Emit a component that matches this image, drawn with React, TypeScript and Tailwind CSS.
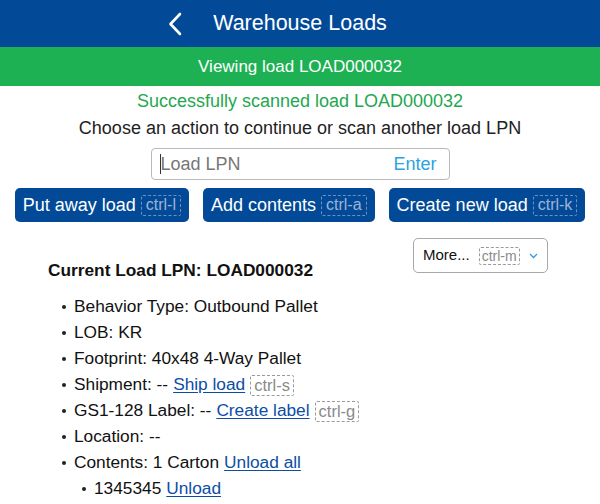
import React from "react";

const Kbd = ({ children, light }: { children: React.ReactNode; light?: boolean }) => (
  <span
    className={
      light
        ? "ml-[5px] inline-flex items-center h-[21px] px-[4px] border border-dashed border-[#6f8fbf] rounded-[2px] text-[16px] leading-none text-[#9fb3d4]"
        : "ml-[5px] inline-flex items-center h-[21px] px-[3px] border border-dashed border-[#9a9a9a] rounded-[2px] text-[16.5px] leading-none text-[#8a8a8a]"
    }
  >
    {children}
  </span>
);

const Bullet = ({ children, nested }: { children: React.ReactNode; nested?: boolean }) => (
  <li className={`flex items-center h-[26px] ${nested ? "pl-[34px]" : "pl-[14px]"}`}>
    <span className="w-[4px] h-[4px] rounded-full bg-[#222] mr-[8px] shrink-0" />
    <span className="flex items-center whitespace-nowrap">{children}</span>
  </li>
);

const Link = ({ children }: { children: React.ReactNode }) => (
  <a className="text-[#0c4ea5] underline underline-offset-[2px] ml-[5px] cursor-pointer">{children}</a>
);

export default function App() {
  return (
    <div
      className="w-[600px] h-[504px] bg-white overflow-hidden"
      style={{ fontFamily: '"Liberation Sans", Arial, sans-serif' }}
    >
      <div className="h-[47px] bg-[#024a97] flex items-center justify-center">
        <svg width="14" height="24" viewBox="0 0 14 24" className="mr-[31px]">
          <path d="M12 2 L2.5 12 L12 22" fill="none" stroke="white" strokeWidth="2.6" strokeLinecap="round" strokeLinejoin="round" />
        </svg>
        <span className="text-white text-[21.5px] leading-none">Warehouse Loads</span>
        <span className="w-[45px]" />
      </div>
      <div className="h-[39px] bg-[#1db153] flex items-center justify-center text-white text-[17px]">
        Viewing load LOAD000032
      </div>

      <div className="flex flex-col items-center">
        <div className="mt-[4px] h-[22px] leading-[22px] text-[18px] text-[#1fa84f]">
          Successfully scanned load LOAD000032
        </div>
        <div className="mt-[5px] h-[22px] leading-[22px] text-[18px] text-[#222]">
          Choose an action to continue or scan another load LPN
        </div>
        <div className="mt-[9px] w-[299px] h-[32px] border border-[#b9b9b9] rounded-[4px] flex items-center pl-[8px] pr-[12px]">
          <span className="w-[1px] h-[20px] bg-[#333]" />
          <span className="text-[18px] text-[#777] flex-1">Load LPN</span>
          <span className="text-[18px] text-[#29a3e0]">Enter</span>
        </div>
        <div className="mt-[8px] flex gap-[14px]">
          <button className="h-[34px] px-[8px] bg-[#024a97] rounded-[5px] text-white text-[18px] flex items-center">
            Put away load<Kbd light>ctrl-l</Kbd>
          </button>
          <button className="h-[34px] px-[8px] bg-[#024a97] rounded-[5px] text-white text-[18px] flex items-center">
            Add contents<Kbd light>ctrl-a</Kbd>
          </button>
          <button className="h-[34px] px-[8px] bg-[#024a97] rounded-[5px] text-white text-[18px] flex items-center">
            Create new load<Kbd light>ctrl-k</Kbd>
          </button>
        </div>
      </div>

      <div className="mt-[16px] pl-[48px] pr-[52px] flex justify-between items-start">
        <div className="mt-[22px] text-[17.3px] leading-[20px] font-bold text-[#111]">Current Load LPN: LOAD000032</div>
        <button className="h-[35px] w-[135px] border border-[#a8a8a8] rounded-[5px] flex items-center pl-[9px] text-[15px] text-[#111]">
          More...
          <span className="ml-[9px] inline-flex items-center h-[18px] px-[2px] border border-dashed border-[#9a9a9a] rounded-[2px] text-[14px] leading-none text-[#8a8a8a]">
            ctrl-m
          </span>
          <svg width="9" height="6" viewBox="0 0 9 6" className="ml-[9px]">
            <path d="M1 1 L4.5 4.5 L8 1" fill="none" stroke="#2ca0e0" strokeWidth="1.3" />
          </svg>
        </button>
      </div>

      <ul className="mt-[14px] pl-[48px] text-[17.3px] text-[#111]">
        <Bullet>Behavior Type: Outbound Pallet</Bullet>
        <Bullet>LOB: KR</Bullet>
        <Bullet>Footprint: 40x48 4-Way Pallet</Bullet>
        <Bullet>
          Shipment: --<Link>Ship load</Link>
          <Kbd>ctrl-s</Kbd>
        </Bullet>
        <Bullet>
          GS1-128 Label: --<Link>Create label</Link>
          <Kbd>ctrl-g</Kbd>
        </Bullet>
        <Bullet>Location: --</Bullet>
        <Bullet>
          Contents: 1 Carton<Link>Unload all</Link>
        </Bullet>
        <Bullet nested>
          1345345<Link>Unload</Link>
        </Bullet>
      </ul>
    </div>
  );
}
